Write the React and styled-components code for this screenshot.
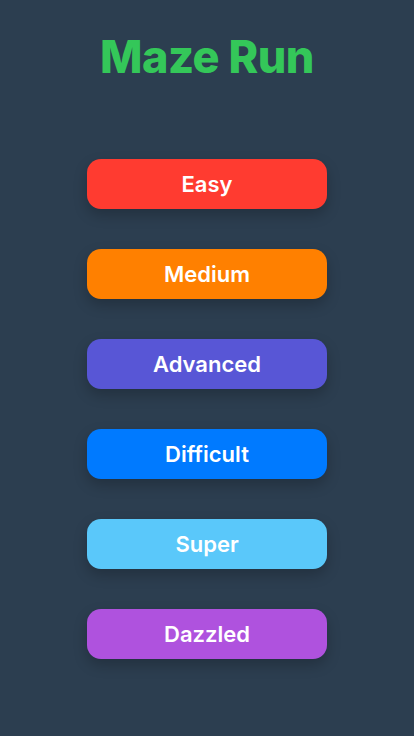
import styled, { createGlobalStyle } from "styled-components";

const GlobalStyle = createGlobalStyle`
  body {
    margin: 0;
    background-color: #2c3e50;
    font-family: Inter, "Noto Sans", sans-serif;
  }
`;

const Container = styled.div`
  width: 100vw;
  min-height: 100vh;
  background-color: #2c3e50;
  display: flex;
  flex-direction: column;
  align-items: center;
  padding-top: 30px;
  box-sizing: border-box;
`;

const Title = styled.h1`
  margin: 0;
  font-size: 45px;
  line-height: 54px;
  font-weight: 800;
  color: #34c759;
  letter-spacing: -0.5px;
`;

const Menu = styled.div`
  margin-top: 75px;
  display: flex;
  flex-direction: column;
  gap: 40px;
`;

const Button = styled.button`
  width: 240px;
  height: 50px;
  border: none;
  border-radius: 14px;
  background-color: ${(props) => props.$color};
  color: white;
  font-family: Inter, "Noto Sans", sans-serif;
  font-size: 22px;
  font-weight: 600;
  box-shadow: 0 6px 14px rgba(0, 0, 0, 0.22);
  cursor: pointer;
`;

const levels = [
  { name: "Easy", color: "#ff3b30" },
  { name: "Medium", color: "#ff8000" },
  { name: "Advanced", color: "#5856d6" },
  { name: "Difficult", color: "#007aff" },
  { name: "Super", color: "#5ac8fa" },
  { name: "Dazzled", color: "#af52de" },
];

const App = () => {
  return (
    <Container>
      <GlobalStyle />
      <Title>Maze Run</Title>
      <Menu>
        {levels.map((level) => (
          <Button key={level.name} $color={level.color}>
            {level.name}
          </Button>
        ))}
      </Menu>
    </Container>
  );
};

export default App;
